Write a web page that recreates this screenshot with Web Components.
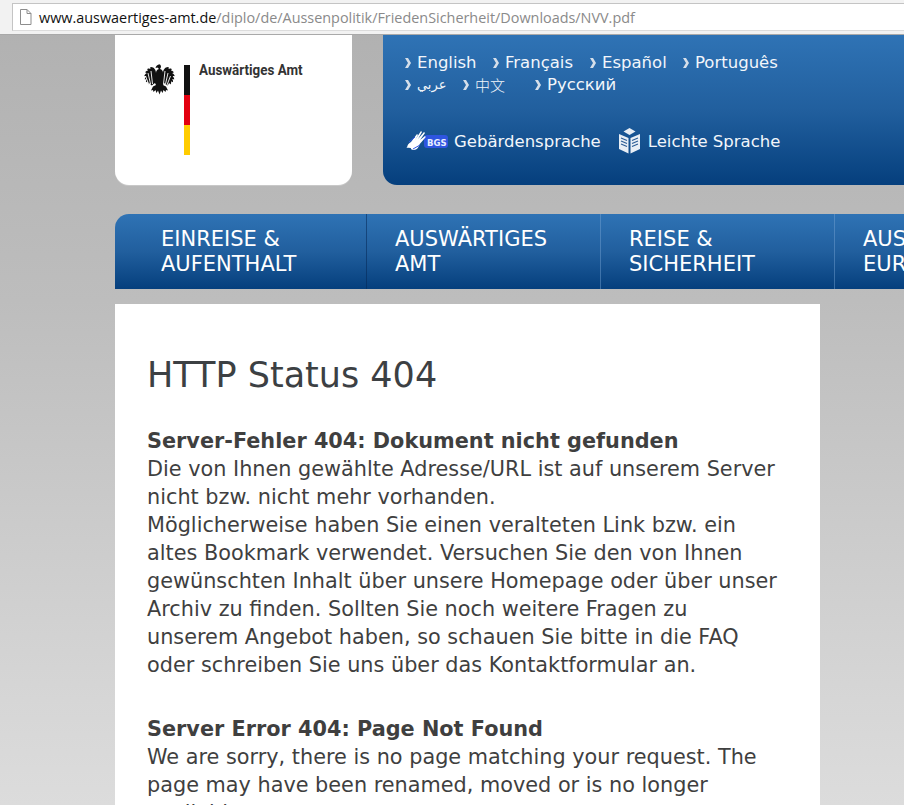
<!DOCTYPE html>
<html lang="de">
<head>
<meta charset="utf-8">
<title>HTTP Status 404</title>
<style>
  html, body { margin: 0; height: 805px; overflow: hidden; }
  body {
    background: linear-gradient(to bottom, #b0b0b0 0, #bdbdbd 300px, #d6d6d6 700px, #dcdcdc 805px);
    font-family: "DejaVu Sans", Verdana, sans-serif;
  }
</style>
</head>
<body>
<browser-bar url-host="www.auswaertiges-amt.de" url-path="/diplo/de/Aussenpolitik/FriedenSicherheit/Downloads/NVV.pdf"></browser-bar>
<site-page>
  <site-header slot="header"></site-header>
  <main-nav slot="nav">
    <nav-item first>EINREISE &amp;<br>AUFENTHALT</nav-item>
    <nav-item>AUSWÄRTIGES<br>AMT</nav-item>
    <nav-item>REISE &amp;<br>SICHERHEIT</nav-item>
    <nav-item>AUSSENPOLITIK<br>EUROPA</nav-item>
  </main-nav>
  <error-card slot="content">
    <h1 slot="title">HTTP Status 404</h1>
    <error-block>
      <span slot="head">Server-Fehler 404: Dokument nicht gefunden</span>
      Die von Ihnen gewählte Adresse/URL ist auf unserem Server<br>
      nicht bzw. nicht mehr vorhanden.<br>
      Möglicherweise haben Sie einen veralteten Link bzw. ein<br>
      altes Bookmark verwendet. Versuchen Sie den von Ihnen<br>
      gewünschten Inhalt über unsere Homepage oder über unser<br>
      Archiv zu finden. Sollten Sie noch weitere Fragen zu<br>
      unserem Angebot haben, so schauen Sie bitte in die FAQ<br>
      oder schreiben Sie uns über das Kontaktformular an.
    </error-block>
    <error-block>
      <span slot="head">Server Error 404: Page Not Found</span>
      We are sorry, there is no page matching your request. The<br>
      page may have been renamed, moved or is no longer<br>
      available.
    </error-block>
  </error-card>
</site-page>

<script>
class BrowserBar extends HTMLElement {
  constructor() {
    super();
    this.attachShadow({ mode: "open" });
    this.shadowRoot.innerHTML = `
      <style>
        :host { display: block; height: 35px; box-sizing: border-box; background: #f2f2f2; border-bottom: 1px solid #a9a9a9; padding: 3px 0 0 12px; }
        .field { height: 28px; box-sizing: border-box; background: #fff; border: 1px solid #c4c4c4; border-right: 0; border-bottom-color: #dcdcdc; display: flex; align-items: center; padding-left: 6px; gap: 7px; font: 14.4px "Open Sans", "DejaVu Sans", sans-serif; white-space: nowrap; }
        svg { flex: none; }
        .host { color: #111; }
        .path { color: #8a8a8a; }
      </style>
      <div class="field">
        <svg width="13" height="16" viewBox="0 0 13 16" fill="none" stroke="#8d8d8d"><path d="M1.5.5h6.5l4 4v11h-10.500z"/><path d="M8 .5v4h4"/></svg>
        <span><span class="host"></span><span class="path"></span></span>
      </div>`;
  }
  connectedCallback() {
    this.shadowRoot.querySelector(".host").textContent = this.getAttribute("url-host");
    this.shadowRoot.querySelector(".path").textContent = this.getAttribute("url-path");
  }
}

class SitePage extends HTMLElement {
  constructor() {
    super();
    this.attachShadow({ mode: "open" });
    this.shadowRoot.innerHTML = `
      <style>
        :host { display: block; padding-left: 115px; }
        .nav { display: block; margin-top: 29px; }
        .content { display: block; margin-top: 15px; }
      </style>
      <slot name="header"></slot>
      <div class="nav"><slot name="nav"></slot></div>
      <div class="content"><slot name="content"></slot></div>`;
  }
}

class SiteHeader extends HTMLElement {
  constructor() {
    super();
    this.attachShadow({ mode: "open" });
    this.shadowRoot.innerHTML = `
      <style>
        :host { display: flex; gap: 31px; height: 150px; }
        .logo { width: 237px; flex: none; box-sizing: border-box; background: #fff; border-radius: 0 0 14px 14px; box-shadow: 0 1px 0 #c8c8c8; display: flex; padding: 29px 0 0 25px; }
        .eagle { margin-top: 0; flex: none; }
        .flag { width: 6px; height: 90px; margin: 1px 0 0 8px; flex: none; background: linear-gradient(to bottom, #111 0 33.3%, #e3000f 33.3% 66.6%, #fc0 66.6%); }
        .name { font: bold 14.4px/1 "Roboto", "Liberation Sans", sans-serif; color: #333; margin: 0 0 0 9px; padding-top: 0; white-space: nowrap; transform: scaleX(.93); transform-origin: left; height: 15px; }
        .panel { flex: 1; background: linear-gradient(to bottom, #2f73b5 0, #215f9e 50%, #053f7d 100%); border-radius: 0 0 0 14px; padding: 17px 0 0 21px; color: #f2f6fb; font-size: 16.5px; }
        .langs { display: grid; grid-template-columns: 88px 97px 93px auto; width: 372px; line-height: 22px; }
        .lang { display: flex; align-items: center; gap: 5px; white-space: nowrap; }
        .row2 { display: grid; grid-template-columns: 58px 72px auto; line-height: 22px; }
        .lang svg { flex: none; }
        .cjk { font-family: "Noto Sans CJK SC", sans-serif; font-size: 15px; font-weight: 300; }
        .ar { font-size: 13px; font-family: "DejaVu Sans", sans-serif; }
        .access { display: flex; align-items: center; margin-top: 30px; padding-left: 2px; height: 30px; }
        .access span { white-space: nowrap; }
        .bgs { margin-right: 6px; }
        .book { margin: 0 7px 0 17px; }
      </style>
      <div class="logo">
        <svg class="eagle" width="36" height="36" viewBox="0 0 36 36" fill="#111">
          <path d="M18 0c2 0 3 1 3 3l-1 2c2 .4 3 2 3 4 0-3 2-6 5-6 1 0 1 1 .5 2 1.500-1 3-.5 3.500.5-.5 0-1 .5-1 1 1.500 0 2.500 1 2.800 2-.8 0-1.300.3-1.500.8 1.400.5 2.200 1.700 2.400 3-.8-.4-1.500-.4-2-.1 1 .8 1.500 2 1.500 3.300-.7-.5-1.400-.7-2-.5.7 1 1 2 .8 3.200-.7-.6-1.400-.9-2-.8.3 1 .2 2-.3 3-.5-.7-1.100-1.100-1.800-1.200-.2 1-.8 1.800-1.600 2.400l-3.300-2.500-1 2 3 1.500 2 4-2-.5-.5 2-2-2-1 3-1.500-2.500-1.500 4-1.500-4-1.500 2.500-1-3-2 2-.5-2-2 .5 2-4 3-1.500-1-2-3.300 2.500c-.8-.6-1.400-1.400-1.600-2.400-.7.1-1.300.5-1.800 1.200-.5-1-.6-2-.3-3-.6-.1-1.300.2-2 .8-.2-1.200.1-2.200.8-3.200-.6-.2-1.300 0-2 .5 0-1.300.5-2.500 1.500-3.300-.5-.3-1.200-.3-2 .1.2-1.300 1-2.500 2.400-3-.2-.5-.7-.8-1.500-.8.3-1 1.300-2 2.800-2 0-.5-.5-1-1-1 .5-1 2-1.500 3.500-.5-.5-1-.5-2 .5-2 3 0 5 3 5 6 0-2 1-3.600 3-4l-1.500-1.500-2 .5c.5-2 2-3.500 4-3.500z"/>
          <g stroke="#fff" stroke-width=".9" fill="none"><path d="M11 7l1.500 13M8 9l2.500 11M5.500 12l3.500 9M25 7l-1.500 13M28 9l-2.500 11M30.500 12l-3.500 9"/></g>
        </svg>
        <div class="flag"></div>
        <div class="name">Auswärtiges Amt</div>
      </div>
      <div class="panel">
        <div class="langs">
          <div class="lang"><lang-chevron></lang-chevron>English</div>
          <div class="lang"><lang-chevron></lang-chevron>Français</div>
          <div class="lang"><lang-chevron></lang-chevron>Español</div>
          <div class="lang"><lang-chevron></lang-chevron>Português</div>
        </div>
        <div class="row2">
          <div class="lang"><lang-chevron></lang-chevron><span class="ar" lang="ar">عربي</span></div>
          <div class="lang"><lang-chevron></lang-chevron><span class="cjk" lang="zh">中文</span></div>
          <div class="lang"><lang-chevron></lang-chevron>Русский</div>
        </div>
        <div class="access">
          <svg class="bgs" width="42" height="24" viewBox="0 0 42 24">
            <rect x="18" y="6" width="24" height="13" rx="3" fill="#2f55e0"/>
            <path d="M1 19c0-3 2-5 4-6l6-8 1 1-3 5 6-9 1 1-4 7 6-7 1 1-5 7 5-4 .8 1-6 7c-1 3-3 6-6 6-2 0-3-1-3-2l-4.800-.5z" fill="#fff"/>
            <path d="M3 13l6-5M7 20l7-4" stroke="#2f55e0" stroke-width="1" fill="none"/>
            <text x="21" y="16.500" font-family="DejaVu Sans" font-weight="bold" font-size="8.500" fill="#e8eeff">BGS</text>
          </svg>
          <span>Gebärdensprache</span>
          <svg class="book" width="23" height="26" viewBox="0 0 23 26">
            <path d="M11.500 0l6 3.500-6 3.500-6-3.500z" fill="#e8eef5"/>
            <path d="M1 6l9.500 4v15.500l-9.500-4.500zM22 6l-9.500 4v15.500l9.500-4.500z" fill="#e8eef5"/>
            <path d="M3 10l6 2.500M3 13l6 2.500M3 16l6 2.500M20 10l-6 2.500M20 13l-6 2.500M20 16l-6 2.500" stroke="#2a5c95" stroke-width="1.100"/>
          </svg>
          <span>Leichte Sprache</span>
        </div>
      </div>`;
  }
}

class LangChevron extends HTMLElement {
  constructor() {
    super();
    this.attachShadow({ mode: "open" });
    this.shadowRoot.innerHTML = `
      <style>:host { display: inline-flex; flex: none; width: 8px; height: 12px; }</style>
      <svg width="8" height="12" viewBox="0 0 8 12"><path d="M1 1l3 0 3 5-3 5-3 0 3-5z" fill="#d5dfea"/></svg>`;
  }
}

class MainNav extends HTMLElement {
  constructor() {
    super();
    this.attachShadow({ mode: "open" });
    this.shadowRoot.innerHTML = `
      <style>
        :host { display: flex; height: 75px; overflow: hidden; background: linear-gradient(to bottom, #2f73b5 0, #215f9e 50%, #053f7d 100%); border-radius: 14px 0 0 0; }
      </style>
      <slot></slot>`;
  }
}

class NavItem extends HTMLElement {
  constructor() {
    super();
    this.attachShadow({ mode: "open" });
    this.shadowRoot.innerHTML = `
      <style>
        :host { display: block; box-sizing: border-box; width: 234px; flex: none; padding: 13px 0 0 28px; color: #fff; font-size: 21px; line-height: 25px; white-space: nowrap; border-right: 1px solid rgba(120, 165, 210, .45); }
        :host([first]) { width: 252px; padding-left: 46px; border-right-color: rgba(5, 40, 85, .55); }
      </style>
      <slot></slot>`;
  }
}

class ErrorCard extends HTMLElement {
  constructor() {
    super();
    this.attachShadow({ mode: "open" });
    this.shadowRoot.innerHTML = `
      <style>
        :host { display: block; box-sizing: border-box; width: 705px; background: #fff; padding: 49px 20px 0 32px; color: #3f3f3f; }
        ::slotted(h1) { margin: 0 0 30px; font-size: 35px; line-height: 44px; font-weight: 400; color: #3c4043; }
      </style>
      <slot name="title"></slot>
      <slot></slot>`;
  }
}

class ErrorBlock extends HTMLElement {
  constructor() {
    super();
    this.attachShadow({ mode: "open" });
    this.shadowRoot.innerHTML = `
      <style>
        :host { display: block; font-size: 20.8px; line-height: 28px; margin-bottom: 36px; white-space: nowrap; }
        .head { display: block; font-weight: bold; }
      </style>
      <span class="head"><slot name="head"></slot></span>
      <slot></slot>`;
  }
}

customElements.define("browser-bar", BrowserBar);
customElements.define("site-page", SitePage);
customElements.define("site-header", SiteHeader);
customElements.define("lang-chevron", LangChevron);
customElements.define("main-nav", MainNav);
customElements.define("nav-item", NavItem);
customElements.define("error-card", ErrorCard);
customElements.define("error-block", ErrorBlock);
</script>
</body>
</html>
